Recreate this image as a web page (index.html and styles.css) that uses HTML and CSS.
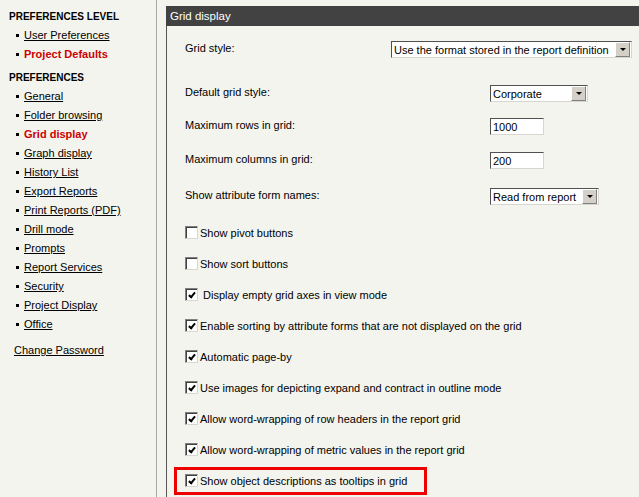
FILE: index.html
```html
<!DOCTYPE html>
<html lang="en">
<head>
    <meta charset="UTF-8">
    <title>Preferences - Grid display</title>
    <link rel="stylesheet" href="styles.css">
</head>
<body>

    <div class="sidebar">
        <div class="side-title">PREFERENCES LEVEL</div>
        <ul class="side-list">
            <li><a href="#">User Preferences</a></li>
            <li class="active">Project Defaults</li>
        </ul>

        <div class="side-title second">PREFERENCES</div>
        <ul class="side-list">
            <li><a href="#">General</a></li>
            <li><a href="#">Folder browsing</a></li>
            <li class="active">Grid display</li>
            <li><a href="#">Graph display</a></li>
            <li><a href="#">History List</a></li>
            <li><a href="#">Export Reports</a></li>
            <li><a href="#">Print Reports (PDF)</a></li>
            <li><a href="#">Drill mode</a></li>
            <li><a href="#">Prompts</a></li>
            <li><a href="#">Report Services</a></li>
            <li><a href="#">Security</a></li>
            <li><a href="#">Project Display</a></li>
            <li><a href="#">Office</a></li>
        </ul>

        <a class="change-pwd" href="#">Change Password</a>
    </div>

    <div class="panel">
        <div class="panel-header">Grid display</div>

        <div class="panel-body">
            <div class="field first">
                <div class="label wide">Grid style:</div>
                <div class="select long">
                    <span class="select-text">Use the format stored in the report definition</span>
                    <span class="select-btn"><i></i></span>
                </div>
            </div>

            <div class="field f2">
                <div class="label">Default grid style:</div>
                <div class="select corp">
                    <span class="select-text">Corporate</span>
                    <span class="select-btn"><i></i></span>
                </div>
            </div>

            <div class="field f3">
                <div class="label">Maximum rows in grid:</div>
                <div class="textbox">1000</div>
            </div>

            <div class="field f4">
                <div class="label">Maximum columns in grid:</div>
                <div class="textbox">200</div>
            </div>

            <div class="field f5">
                <div class="label">Show attribute form names:</div>
                <div class="select read">
                    <span class="select-text">Read from report</span>
                    <span class="select-btn"><i></i></span>
                </div>
            </div>

            <div class="checks">
                <div class="check-row"><span class="box"></span>Show pivot buttons</div>
                <div class="check-row"><span class="box"></span>Show sort buttons</div>
                <div class="check-row"><span class="box on"></span>&nbsp;Display empty grid axes in view mode</div>
                <div class="check-row"><span class="box on"></span>Enable sorting by attribute forms that are not displayed on the grid</div>
                <div class="check-row"><span class="box on"></span>Automatic page-by</div>
                <div class="check-row"><span class="box on"></span>Use images for depicting expand and contract in outline mode</div>
                <div class="check-row"><span class="box on"></span>Allow word-wrapping of row headers in the report grid</div>
                <div class="check-row"><span class="box on"></span>Allow word-wrapping of metric values in the report grid</div>
                <div class="check-row">
                    <div class="highlight"><span class="box on"></span>Show object descriptions as tooltips in grid</div>
                </div>
            </div>
        </div>
    </div>

</body>
</html>
```

FILE: styles.css
```css
body {
    margin: 0;
    background-color: #f4f4ef;
    font-family: "Liberation Sans", Arial, sans-serif;
    font-size: 11px;
    color: #000;
    display: flex;
    height: 497px;
    overflow: hidden;
}

a {
    color: #000;
}

/* left navigation */
.sidebar {
    width: 147px;
    padding: 7px 0 0 9px;
    border-right: 1px solid #a8a8a4;
    flex-shrink: 0;
}

.side-title {
    font-weight: bold;
    font-size: 10px;
    line-height: 19px;
}

.side-title.second {
    margin-top: 4px;
}

.side-list {
    list-style: none;
    margin: 0;
    padding: 0 0 0 7px;
}

.side-list li {
    line-height: 19px;
    display: flex;
    align-items: center;
}

.side-list li::before {
    content: "";
    width: 3px;
    height: 3px;
    background: #000;
    margin-right: 5px;
}

.side-list li.active {
    color: #cc0000;
    font-weight: bold;
}

.change-pwd {
    display: block;
    margin: 7px 0 0 5px;
    line-height: 19px;
}

/* main panel */
.panel {
    margin: 6px 0 0 9px;
    flex: 1;
    border-left: 1px solid #555;
}

.panel-header {
    background-color: #424242;
    color: #fff;
    height: 20px;
    line-height: 20px;
    padding-left: 4px;
    margin-left: -1px;
    font-size: 11.5px;
}

.panel-body {
    padding-left: 18px;
}

.field {
    display: flex;
    align-items: flex-start;
}

.field.first { margin-top: 15px; }
.field.f2 { margin-top: 27px; }
.field.f3 { margin-top: 16px; }
.field.f4 { margin-top: 17px; }
.field.f5 { margin-top: 19px; }

.label {
    width: 305px;
    padding-top: 1px;
    line-height: 13px;
}

.label.wide {
    width: 206px;
}

.select, .textbox {
    height: 17px;
    box-sizing: border-box;
    border: 1px solid;
    border-color: #505050 #d8d6ce #d8d6ce #505050;
    background: #fff;
    display: flex;
    align-items: center;
}

.select-text {
    flex: 1;
    padding-left: 2px;
    white-space: nowrap;
    overflow: hidden;
}

.select-btn {
    width: 13px;
    height: 13px;
    margin-right: 1px;
    background: #d4d0c8;
    border: 1px solid;
    border-color: #fff #808080 #808080 #fff;
    display: flex;
    align-items: center;
    justify-content: center;
    flex-shrink: 0;
}

.select-btn i {
    width: 0;
    height: 0;
    border-left: 3px solid transparent;
    border-right: 3px solid transparent;
    border-top: 3px solid #000;
}

.select.long { width: 241px; }
.select.corp { width: 98px; }
.select.read { width: 109px; }

.textbox {
    width: 54px;
    padding-left: 2px;
}

/* checkbox options */
.checks {
    margin-top: 12px;
}

.check-row {
    height: 31px;
    display: flex;
    align-items: center;
    white-space: nowrap;
}

.box {
    width: 13px;
    height: 13px;
    box-sizing: border-box;
    border: 1px solid;
    border-color: #808080 #d8d6ce #d8d6ce #808080;
    box-shadow: inset 1px 1px #404040;
    background: #fff;
    margin-right: 2px;
    flex-shrink: 0;
    position: relative;
}

.box.on::after {
    content: "";
    position: absolute;
    left: 4px;
    top: 2px;
    width: 2px;
    height: 5px;
    border: solid #000;
    border-width: 0 2px 2px 0;
    transform: rotate(40deg);
}

.highlight {
    display: flex;
    align-items: center;
    box-sizing: border-box;
    width: 253px;
    height: 28px;
    border: 3px solid #ee0000;
    margin-left: -11px;
    padding-left: 8px;
}
```
